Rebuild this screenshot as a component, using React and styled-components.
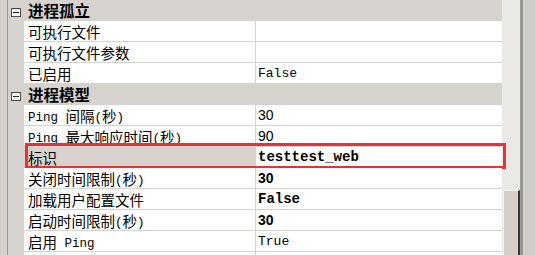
import React from 'react';
import styled, { createGlobalStyle, css } from 'styled-components';

const GlobalStyle = createGlobalStyle`
  body {
    margin: 0;
    background: #d4d0c8;
    font-family: "Noto Sans CJK SC", sans-serif;
    color: #000;
  }
`;

const Window = styled.div`
  display: flex;
  width: 535px;
  height: 255px;
  overflow: hidden;
  background: #d4d0c8;
`;

const Grid = styled.div`
  display: flex;
  flex-direction: column;
  width: 494px;
  margin-left: 7px;
  border-left: 1px solid #9c9890;
  background: #d6d3ce;
`;

const Row = styled.div`
  position: relative;
  display: flex;
  flex: none;
  height: 20px;
  border-bottom: 1px solid #d6d3ce;

  ${(p) =>
    p.$marked &&
    css`
      &::after {
        content: '';
        position: absolute;
        left: 17px;
        right: -4px;
        top: -4px;
        bottom: -2px;
        border: 3px solid #e6303a;
      }
    `}
`;

const Gutter = styled.div`
  display: flex;
  justify-content: center;
  width: 16px;
  flex: none;
  background: #d6d3ce;
`;

const Toggle = styled.span`
  position: relative;
  box-sizing: border-box;
  width: 10px;
  height: 9px;
  margin-top: 8px;
  margin-left: -1px;
  border: 1px solid #4a4a4a;
  background: #fff;

  &::after {
    content: '';
    position: absolute;
    left: 1px;
    right: 1px;
    top: 3px;
    height: 1px;
    background: #222;
  }
`;

const Category = styled.div`
  flex: 1;
  padding-left: 4px;
  font-size: 15.5px;
  font-weight: 700;
  line-height: 21px;
`;

const Name = styled.div`
  width: 227px;
  height: 20px;
  flex: none;
  padding-left: 4px;
  border-right: 1px solid #d6d3ce;
  background: ${(p) => (p.$selected ? '#d6d3ce' : '#fff')};
  font-size: 14.5px;
  line-height: 21px;
  white-space: nowrap;
  overflow: hidden;
`;

const Latin = styled.span`
  font-family: "Liberation Mono", monospace;
  font-size: 12.5px;
  line-height: 0;
  vertical-align: 1px;
`;

const Value = styled.div`
  flex: 1;
  padding-left: 2px;
  background: #fff;
  font-family: ${(p) => (p.$num ? '"Liberation Sans", sans-serif' : '"Liberation Mono", monospace')};
  font-size: ${(p) => (p.$bold || p.$num ? '14px' : '13px')};
  font-weight: ${(p) => (p.$bold ? 700 : 400)};
  line-height: 21px;
  white-space: nowrap;
`;

const Scrollbar = styled.div`
  display: flex;
  flex-direction: column;
  width: 18px;
  flex: none;
  background: #ebe9e5;
`;

const Thumb = styled.div`
  flex: 1;
  margin-top: 190px;
  margin-left: 1px;
  border-top: 1px solid #f4f3f0;
  border-left: 1px solid #f4f3f0;
  border-right: 2px solid #333;
  background: #d4d0c8;
`;

const Edge = styled.div`
  flex: 1;
  border-left: 3px solid #9a9894;
  background: #d0cec9;
`;

const rows = [
  { cat: '进程孤立' },
  { name: '可执行文件', value: '' },
  { name: '可执行文件参数', value: '' },
  { name: '已启用', value: 'False' },
  { cat: '进程模型' },
  { name: 'Ping 间隔(秒)', value: '30', num: true },
  { name: 'Ping 最大响应时间(秒)', value: '90', num: true },
  { name: '标识', value: 'testtest_web', bold: true, selected: true, marked: true },
  { name: '关闭时间限制(秒)', value: '30', num: true, bold: true },
  { name: '加载用户配置文件', value: 'False', bold: true },
  { name: '启动时间限制(秒)', value: '30', num: true, bold: true },
  { name: '启用 Ping', value: 'True' },
  { name: '闲置超时(分钟)', value: '20', num: true },
];

// latin runs are drawn in the smaller mono face, like the original dialog
const renderName = (text) =>
  text.split(/([A-Za-z() ]+)/).map((part, i) =>
    /[A-Za-z() ]/.test(part) ? <Latin key={i}>{part}</Latin> : part
  );

const App = () => (
  <Window>
    <GlobalStyle />
    <Grid>
      {rows.map((r, i) =>
        r.cat ? (
          <Row key={i}>
            <Gutter>
              <Toggle />
            </Gutter>
            <Category>{r.cat}</Category>
          </Row>
        ) : (
          <Row key={i} $marked={r.marked}>
            <Gutter />
            <Name $selected={r.selected}>{renderName(r.name)}</Name>
            <Value $num={r.num} $bold={r.bold}>
              {r.value}
            </Value>
          </Row>
        )
      )}
    </Grid>
    <Scrollbar>
      <Thumb />
    </Scrollbar>
    <Edge />
  </Window>
);

export default App;
